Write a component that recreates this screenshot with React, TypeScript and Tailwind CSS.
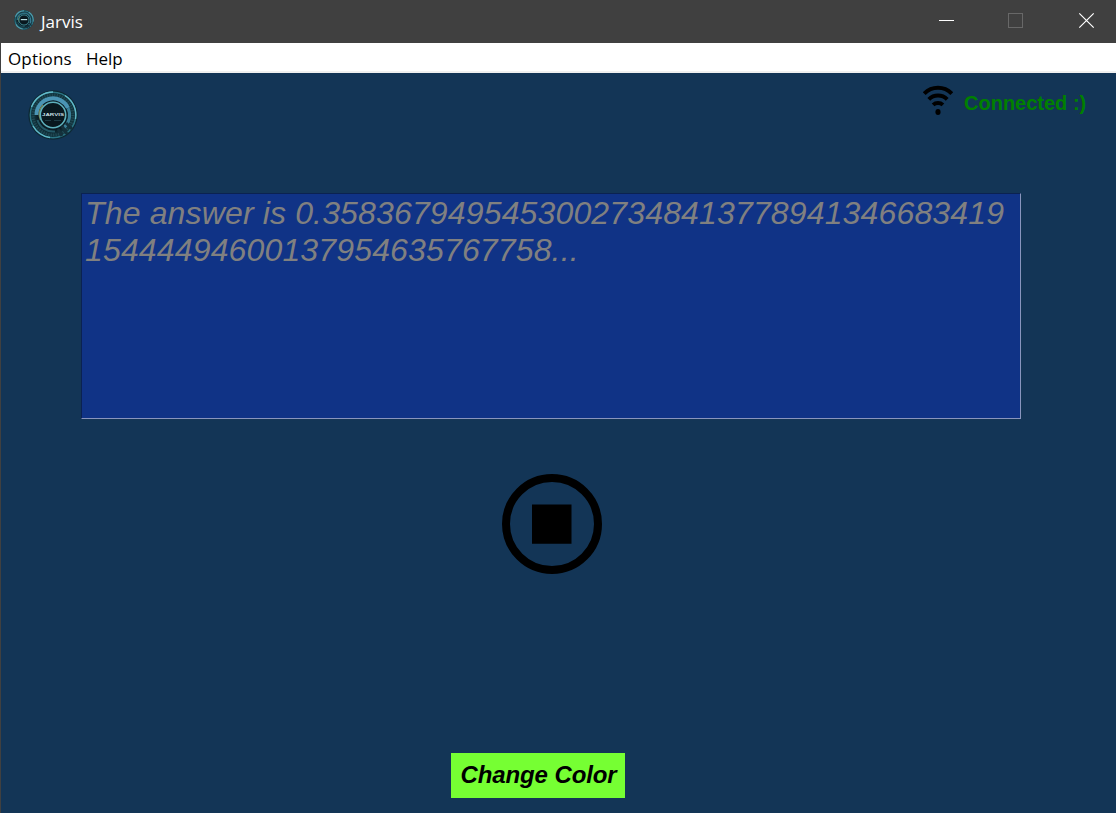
import React from 'react';

function ReactorLogo({ className, small = false }: { className: string; small?: boolean }) {
  return (
    <svg className={className} viewBox="0 0 50 50">
      <defs>
        <radialGradient id={small ? 'coreSmall' : 'core'}>
          <stop offset="0" stopColor="#0b2029" />
          <stop offset="0.6" stopColor="#0a1c24" />
          <stop offset="0.8" stopColor="#123842" />
          <stop offset="0.95" stopColor="#0b252e" />
          <stop offset="1" stopColor="#0b252e" stopOpacity="0.3" />
        </radialGradient>
      </defs>
      <circle cx="25" cy="25" r="25" fill={small ? 'url(#coreSmall)' : 'url(#core)'} />
      <circle cx="25" cy="25" r="22.7" fill="none" stroke="#2b7484" strokeWidth={small ? 3 : 1.5} />
      <path d="M3.5 17A23 23 0 0 1 25 2M37 5.5A23 23 0 0 1 47.5 29M5 36A23 23 0 0 0 22 47.5" fill="none" stroke={small ? '#4f9bab' : '#62b9c9'} strokeWidth={small ? 3 : 1.4} />
      <circle cx="25" cy="25" r="20" fill="none" stroke="#244b56" strokeWidth="3" strokeDasharray="1 1.5" />
      <path d="M8.5 25A16.5 16.5 0 0 1 40 18" fill="none" stroke={small ? '#2d7183' : '#4a94b4'} strokeWidth="4" />
      <path d="M40 18A16.5 16.5 0 0 1 36 37.5" fill="none" stroke="#397f97" strokeWidth="3" />
      <path d="M9.5 30A16.5 16.5 0 0 0 27 41.5" fill="none" stroke="#235866" strokeWidth="2" />
      <path d="M12.5 30A14 14 0 0 1 15 15" fill="none" stroke="#788452" strokeWidth={small ? 2.5 : 1.3} />
      <circle cx="25" cy="25" r="12.7" fill="#09181f" stroke={small ? '#3e8792' : '#5eb1bd'} strokeWidth={small ? 2.5 : 1.6} />
      <path d="M30 39l4 7M34 36l5 8M38 33l6 6" stroke="#14303b" strokeWidth="3" />
      {small ? (
        <path d="M17 24h16" stroke="#bce2e5" strokeWidth="3" />
      ) : (
        <>
          <text x="25" y="25.8" textAnchor="middle" textLength="22" lengthAdjust="spacingAndGlyphs" fontFamily="Liberation Sans, sans-serif" fontSize="4.4" fontWeight="700" fill="#c6dfe3">JARVIS</text>
          <path d="M17 30.5h6M26 30.5h7" stroke="#254651" strokeWidth="0.8" />
        </>
      )}
    </svg>
  );
}

function TitleBar() {
  return (
    <header className="flex h-[43px] shrink-0 items-center bg-[#404040] text-white">
      <ReactorLogo className="ml-[13px] mb-[3px] size-[20px]" small />
      <h1 className="ml-[7px] w-[44px] whitespace-nowrap font-['Open_Sans','Noto_Sans',sans-serif] text-[17px] leading-[24px]">Jarvis</h1>
      <div className="ml-auto mb-[2px] flex items-center">
        <svg className="mr-[52px] size-[17px]" viewBox="0 0 17 17" shapeRendering="crispEdges"><path d="M1 8.5h15" stroke="#fff" /></svg>
        <svg className="mr-[54px] size-[17px]" viewBox="0 0 17 17" shapeRendering="crispEdges"><rect x="1.5" y="1.5" width="14" height="14" fill="none" stroke="#686868" /></svg>
        <svg className="mr-[21px] size-[17px]" viewBox="0 0 17 17"><path d="m1.3 1.3 14.4 14.4M15.7 1.3 1.3 15.7" stroke="#fff" strokeWidth="1.2" /></svg>
      </div>
    </header>
  );
}

function WifiIcon() {
  return (
    <svg className="mt-3 h-[30px] w-[30px]" viewBox="0 0 30 30" fill="none" stroke="#000" strokeWidth="4">
      <path d="M1.2 8.6A19 19 0 0 1 28.8 8.6" />
      <path d="M5.8 14.3A12.9 12.9 0 0 1 24.2 14.3" />
      <path d="M10.1 19.9A7.2 7.2 0 0 1 19.9 19.9" />
      <ellipse cx="15" cy="27" rx="2.6" ry="3" fill="#000" stroke="none" />
    </svg>
  );
}

export default function App() {
  return (
    <div className="flex h-[813px] w-[1116px] flex-col overflow-hidden border-l border-[#404040] bg-[#133556] font-['Liberation_Sans',Arial,sans-serif]">
      <TitleBar />
      <nav className="flex h-[30px] shrink-0 items-center border-b-2 border-[#f0f0f0] bg-white pl-[7px] pt-[3px] font-['Open_Sans','Noto_Sans',sans-serif] text-[17px] leading-[24px] text-black">
        <button className="w-[78px] text-left tracking-[0.15px]">Options</button>
        <button>Help</button>
      </nav>
      <main className="flex min-h-0 flex-1 flex-col">
        <div className="flex h-[120px] shrink-0 items-start">
          <ReactorLogo className="ml-[27px] mt-[17px] size-[50px]" />
          <div className="ml-auto mr-[29px] flex items-start">
            <WifiIcon />
            <p className="ml-[11px] mt-[18px] w-[123px] whitespace-nowrap text-[20px] font-bold leading-[24px] text-[#008000]">Connected :)</p>
          </div>
        </div>
        <section className="ml-[80px] h-[226px] w-[940px] shrink-0 border border-t-[#0b2251] border-l-[#0b2251] border-b-[#8995bd] border-r-[#8995bd] bg-[#103386] pl-[3px] pt-px text-[32px] italic leading-[37px] text-[#808080]">
          <p className="whitespace-nowrap tracking-[0.15px]">
            The answer is 0.35836794954530027348413778941346683419<br />
            15444494600137954635767758...
          </p>
        </section>
        <button className="ml-[501px] mt-[55px] size-[100px] shrink-0" aria-label="Stop">
          <svg className="size-full" viewBox="0 0 100 100">
            <circle cx="50" cy="50" r="46" fill="none" stroke="#000" strokeWidth="8" />
            <path d="M30 30.5h39.5v39.2H30z" />
          </svg>
        </button>
        <button className="ml-[450px] mt-[179px] h-[45px] w-[174px] shrink-0 whitespace-nowrap bg-[#76ff33] pb-[2px] pl-px text-[24px] font-bold italic leading-[43px] tracking-[-0.1px] text-black">Change Color</button>
      </main>
    </div>
  );
}
